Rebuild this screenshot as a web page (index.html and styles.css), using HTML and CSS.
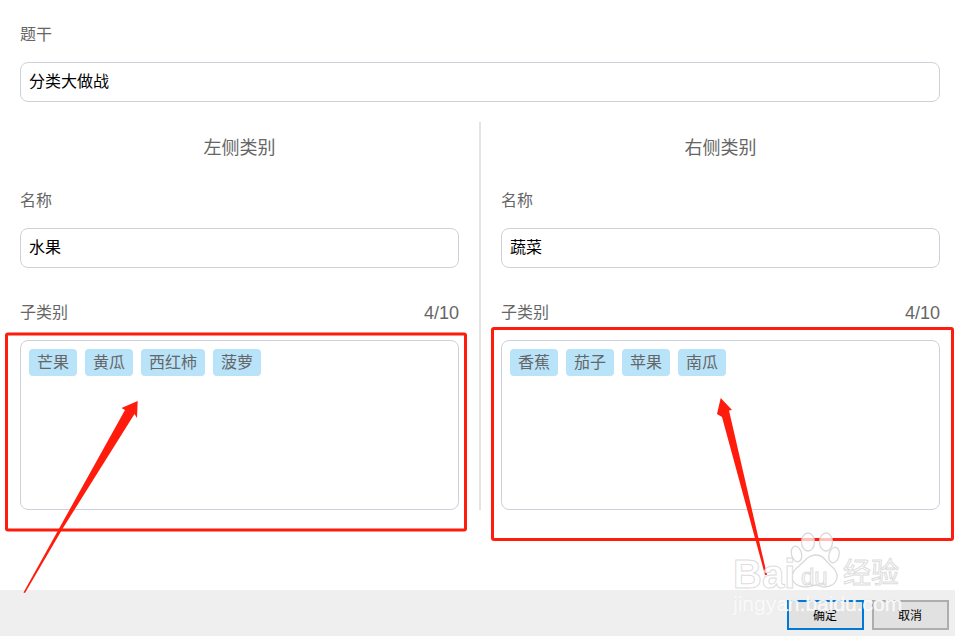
FILE: index.html
```html
<!DOCTYPE html>
<html lang="zh-CN">
<head>
<meta charset="utf-8">
<title>分类大做战</title>
<link rel="stylesheet" href="styles.css">
</head>
<body>
<div class="page">
  <main class="form">
    <div class="label stem-label">题干</div>
    <div class="input">分类大做战</div>
    <div class="columns">
      <section class="col">
        <h2 class="col-title">左侧类别</h2>
        <div class="label">名称</div>
        <div class="input">水果</div>
        <div class="sub-head"><span>子类别</span><span class="count">4/10</span></div>
        <div class="tag-box">
          <span class="tag">芒果</span><span class="tag">黄瓜</span><span class="tag">西红柿</span><span class="tag">菠萝</span>
        </div>
      </section>
      <div class="divider"></div>
      <section class="col">
        <h2 class="col-title">右侧类别</h2>
        <div class="label">名称</div>
        <div class="input">蔬菜</div>
        <div class="sub-head"><span>子类别</span><span class="count">4/10</span></div>
        <div class="tag-box">
          <span class="tag">香蕉</span><span class="tag">茄子</span><span class="tag">苹果</span><span class="tag">南瓜</span>
        </div>
      </section>
    </div>
  </main>
  <footer class="footer">
    <button class="btn btn-primary">确定</button>
    <button class="btn">取消</button>
  </footer>
</div>

<svg class="marks" width="955" height="636" viewBox="0 0 955 636">
  <rect x="6.5" y="334" width="459" height="196" rx="1.5" fill="none" stroke="#ff1c0c" stroke-width="3"/>
  <rect x="492.5" y="328.5" width="460" height="211" rx="1.5" fill="none" stroke="#ff1c0c" stroke-width="3"/>
  <polygon fill="#ff1c0c" points="23.5,592.5 125,410 121.5,408 137.7,401 137,418 134.5,414 63,528 25,593"/>
  <polygon fill="#ff1c0c" points="767,575 765,575 722,417 717,414 720.7,398 732,410 729,410.5"/>
</svg>

<div class="watermark">
  <svg class="paw" width="60" height="60" viewBox="0 0 60 60">
    <g fill="#fff" fill-opacity=".72" stroke="#cfcfcf" stroke-opacity=".8" stroke-width="1.3">
      <ellipse cx="6.5" cy="24" rx="5" ry="8" transform="rotate(-15 6.5 24)"/>
      <ellipse cx="18" cy="12" rx="6.5" ry="9"/>
      <ellipse cx="36" cy="12" rx="6.5" ry="9"/>
      <ellipse cx="44" cy="25" rx="5" ry="8" transform="rotate(15 44 25)"/>
      <path d="M26 25c7 0 9 5 14 10 5 4 8 8 7 13-1 6-7 9-13 9-4 0-6-2-8-2s-5 2-10 2c-7 0-13-3-14-9-1-5 3-9 8-13 5-4 8-10 16-10z"/>
    </g>
  </svg>
  <span class="wm-bai">Bai</span>
  <span class="wm-du">du</span>
  <span class="wm-cn">经验</span>
  <span class="wm-url">jingyan.baidu.com</span>
</div>
</body>
</html>
```
FILE: styles.css
```css
* { box-sizing: border-box; }
html, body { margin: 0; padding: 0; }
body {
  width: 955px;
  height: 636px;
  overflow: hidden;
  background: #fff;
  font-family: "Liberation Sans", "Noto Sans CJK SC", sans-serif;
  position: relative;
}
.page {
  display: flex;
  flex-direction: column;
  height: 636px;
}
.form {
  height: 590px;
  padding: 24px 15px 0 20px;
}
.label {
  font-size: 16px;
  line-height: 22px;
  color: #666;
  margin-bottom: 17px;
}
.stem-label { margin-bottom: 16px; }
.col .label { margin-bottom: 16px; }
.input {
  height: 40px;
  border: 1px solid #d0d0da;
  border-radius: 8px;
  padding: 0 8px;
  font-size: 16px;
  line-height: 37px;
  color: #000;
}
.columns {
  display: flex;
  margin-top: 20px;
}
.col { width: 439px; }
.divider {
  width: 2px;
  height: 388px;
  background: #e4e4e6;
  margin: 0 20px;
  flex: none;
}
.col-title {
  margin: 13px 0 29px;
  font-size: 18px;
  line-height: 26px;
  font-weight: 400;
  color: #666;
  text-align: center;
}
.sub-head {
  display: flex;
  justify-content: space-between;
  align-items: center;
  height: 22px;
  margin-top: 33px;
  padding-top: 1px;
  font-size: 16px;
  line-height: 20px;
  color: #666;
}
.count { font-size: 18px; line-height: 20px; }
.tag-box {
  height: 170px;
  margin-top: 17px;
  padding: 8px;
  border: 1px solid #d0d0da;
  border-radius: 8px;
  display: flex;
  align-items: flex-start;
  gap: 8px;
}
.tag {
  height: 27px;
  padding: 1px 8px 0;
  border-radius: 4px;
  background: #b9e3f9;
  font-size: 16px;
  line-height: 26px;
  color: #666;
}
.footer {
  height: 46px;
  background: #efefef;
  display: flex;
  justify-content: flex-end;
  align-items: flex-start;
  gap: 8px;
  padding: 10px 6px 0 0;
}
.btn {
  width: 77px;
  height: 30px;
  border: 2px solid #adadad;
  background: #e1e1e1;
  font-family: inherit;
  font-size: 12px;
  line-height: 24px;
  color: #000;
  padding: 1px 1px 0 0;
}
.btn-primary { border-color: #0078d7; }
.marks {
  position: absolute;
  left: 0;
  top: 0;
  pointer-events: none;
}
.watermark {
  position: absolute;
  left: 730px;
  top: 530px;
  width: 180px;
  height: 90px;
  pointer-events: none;
}
.watermark span {
  position: absolute;
  color: rgba(255,255,255,.8);
  -webkit-text-stroke: 1px rgba(205,205,205,.7);
  white-space: nowrap;
}
.paw { position: absolute; left: 60px; top: 0; }
.wm-bai { left: 3px; top: 22px; font-size: 40px; line-height: 44px; font-weight: 700; }
.wm-du { left: 71px; top: 33px; font-size: 24px; line-height: 28px; }
.wm-cn { left: 113px; top: 27px; font-size: 28px; line-height: 34px; }
.watermark .wm-url {
  left: 3px;
  top: 61px;
  font-size: 21px;
  line-height: 26px;
  color: rgba(255,255,255,.85);
  -webkit-text-stroke: .7px rgba(255,255,255,.7);
  text-shadow: 0 0 1px rgba(190,190,190,.7);
}
```
